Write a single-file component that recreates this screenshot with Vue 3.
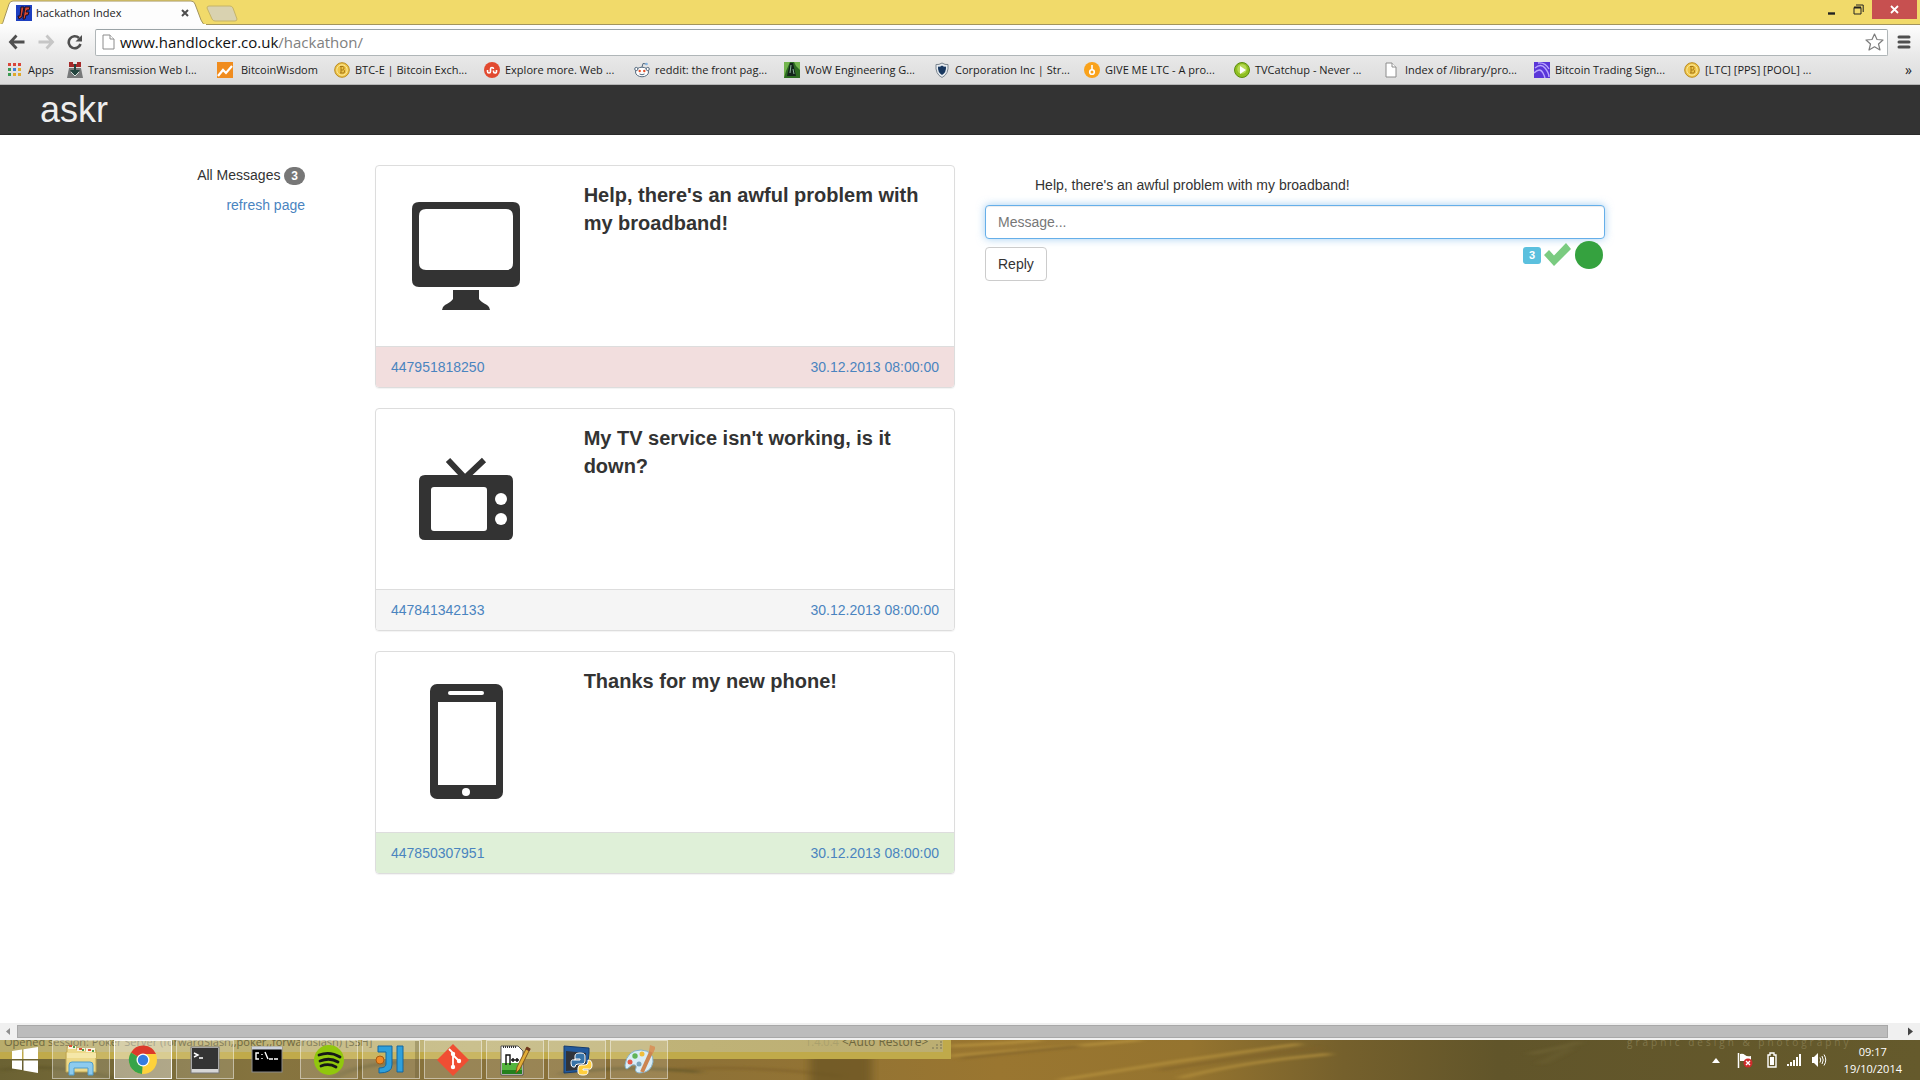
<template>
  <div class="desktop">
    <header class="browser">
      <div class="tab-strip">
        <div class="tab">
          <svg class="tab-shape" viewBox="0 0 206 25" aria-hidden="true">
            <path d="M0 25C3 24 3 22 4 19L9 4Q10 1 13 1H191Q194 1 195 4L201 20Q203 25 206 25Z" fill="#fdfdfd" stroke="#a3945c" />
            <path d="M0 25H206" stroke="#fdfdfd" stroke-width="2" />
          </svg>
          <svg class="favicon" viewBox="0 0 16 16" aria-hidden="true">
            <rect width="16" height="16" fill="#1d3fc0" />
            <path d="M5 2H8L6 12L3 14L2 11H4ZM9 2H14L13 5H11L10 7H13L12 10H10L9 14H7Z" fill="#d8452d" stroke="#1a0e20" stroke-width="1" />
          </svg>
          <span class="tab-title">hackathon Index</span>
          <button class="tab-close" aria-label="Close tab">
            <svg width="8" height="8" viewBox="0 0 8 8"><path d="M1 1L7 7M7 1L1 7" stroke="#4d4d4d" stroke-width="2" /></svg>
          </button>
        </div>
        <button class="new-tab" aria-label="New tab">
          <svg width="32" height="17" viewBox="0 0 32 17"><path d="M3 1H24Q26 1 27 3L31 14Q31 16 29 16H9Q7 16 6 14L1 3Q1 1 3 1Z" fill="#d9d2b0" stroke="#c5b468" /></svg>
        </button>
        <div class="window-buttons">
          <button class="win-btn" aria-label="Minimize">
            <svg width="10" height="12" viewBox="0 0 10 12"><path d="M1 9.5H8" stroke="#222" stroke-width="2.4" /></svg>
          </button>
          <button class="win-btn" aria-label="Restore">
            <svg width="11" height="11" viewBox="0 0 11 11" fill="none" stroke="#222"><path d="M1 3.5H8V10H1Z" /><path d="M1 3.5H8" stroke-width="2" /><path d="M3 1H10.2V8" /></svg>
          </button>
          <button class="win-btn win-close" aria-label="Close">
            <svg width="9" height="9" viewBox="0 0 9 9"><path d="M1 1L8 8M8 1L1 8" stroke="#fff" stroke-width="1.8" /></svg>
          </button>
        </div>
      </div>

      <div class="toolbar">
        <button class="nav-btn" aria-label="Back">
          <svg width="18" height="16" viewBox="0 0 18 16" fill="none" stroke="#4f4f4f" stroke-width="2.8"><path d="M8.5 1.5L2.5 8L8.5 14.5M3 8H16.5" /></svg>
        </button>
        <button class="nav-btn" aria-label="Forward">
          <svg width="18" height="16" viewBox="0 0 18 16" fill="none" stroke="#c6c6c6" stroke-width="2.8"><path d="M9.5 1.5L15.5 8L9.5 14.5M15 8H1.5" /></svg>
        </button>
        <button class="nav-btn" aria-label="Reload">
          <svg width="18" height="16" viewBox="0 0 18 16"><path d="M14.5 10A6 6 0 1 1 13 4" fill="none" stroke="#4f4f4f" stroke-width="2.6" /><path d="M16 1V7.5H9.5Z" fill="#4f4f4f" /></svg>
        </button>
        <div class="omnibox">
          <svg width="13" height="16" viewBox="0 0 13 16" fill="#fff" stroke="#8c8c8c"><path d="M1 1H8L12 5V15H1Z" /><path d="M8 1V5H12" /></svg>
          <span class="url">www.handlocker.co.uk<span class="url-path">/hackathon/</span></span>
          <svg class="star" width="19" height="18" viewBox="0 0 19 18"><path d="M9.5 1L12 6.5L18 7L13.5 11L15 17L9.5 13.8L4 17L5.5 11L1 7L7 6.5Z" fill="#fff" stroke="#7d7d7d" stroke-width="1.2" stroke-linejoin="round" /></svg>
        </div>
        <button class="menu-btn" aria-label="Menu">
          <svg width="14" height="14" viewBox="0 0 14 14"><path d="M2 2H12M2 7H12M2 12H12" stroke="#4f4f4f" stroke-width="3" stroke-linecap="round" /></svg>
        </button>
      </div>

      <nav class="bookmarks">
        <a class="bookmark bookmark-apps" href="#">
          <svg width="14" height="14" viewBox="0 0 14 14" aria-hidden="true">
            <rect v-for="(color, i) in appDots" :key="i" :x="(i % 3) * 5" :y="Math.floor(i / 3) * 5" width="3" height="3" :fill="color" />
          </svg>
          <span>Apps</span>
        </a>
        <a v-for="mark in bookmarks" :key="mark.label" class="bookmark" :class="{ 'bookmark-short': mark.short }" href="#">
          <svg width="16" height="16" viewBox="0 0 16 16" aria-hidden="true">
            <g v-if="mark.icon === 'transmission'">
              <path d="M2 6H14L16 16H0Z" fill="#77797a" /><path d="M2 0H6V2H10V0H14V5H2Z" fill="#a52a2a" /><path d="M7 2H9V8H13L8 14L3 8H7Z" fill="#23453f" /><path d="M4 10L8 14L12 10" fill="none" stroke="#d5e0dc" />
            </g>
            <g v-else-if="mark.icon === 'chart'">
              <rect width="16" height="16" fill="#f08c1e" /><path d="M1 14L6 8L9 11L15 4" fill="none" stroke="#fff" stroke-width="2.2" />
            </g>
            <g v-else-if="mark.icon === 'coin'">
              <circle cx="8" cy="8" r="7.3" fill="#efc64a" stroke="#b98a20" /><circle cx="8" cy="8" r="5.2" fill="none" stroke="#fbe79b" /><path d="M6 4.5H9Q11 5 9.5 7.7Q11.5 8.5 10 11H6M7 4.5V11M7 8H9" fill="none" stroke="#a67616" />
            </g>
            <g v-else-if="mark.icon === 'stumble'">
              <circle cx="8" cy="8" r="8" fill="#e2492f" /><path d="M3.5 8V9.5A1.5 1.5 0 0 0 6.5 9.5V7A1.5 1.5 0 0 1 9.5 7M9.5 8.5V9.5A1.5 1.5 0 0 0 12.5 9.5V8" fill="none" stroke="#fff" stroke-width="1.6" />
            </g>
            <g v-else-if="mark.icon === 'reddit'">
              <ellipse cx="8" cy="10" rx="6.5" ry="4.8" fill="#fff" stroke="#53687d" /><circle cx="2.3" cy="7" r="1.6" fill="#fff" stroke="#53687d" /><circle cx="13.7" cy="7" r="1.6" fill="#fff" stroke="#53687d" /><path d="M8 5L9 1.5L12.5 2M5.5 12Q8 13.5 10.5 12" fill="none" stroke="#53687d" /><circle cx="12.5" cy="2" r="1.3" fill="#83b4e2" /><circle cx="5.7" cy="9" r="1.2" fill="#e5502a" /><circle cx="10.3" cy="9" r="1.2" fill="#e5502a" />
            </g>
            <g v-else-if="mark.icon === 'wow'">
              <rect width="16" height="16" fill="#2d6b22" /><path d="M0 0H6L2 9L0 16ZM10 0H16V8L12 4Z" fill="#73b54e" /><path d="M6 1H9L12 14H3Z" fill="#12241a" /><path d="M7 3L6 11M9 7L10 12" stroke="#8fb7a0" />
            </g>
            <g v-else-if="mark.icon === 'shield'">
              <path d="M8 1Q11 3 14 2.5Q15 12 8 15.5Q1 12 2 2.5Q5 3 8 1Z" fill="#e6ebf0" stroke="#7b858f" /><path d="M8 3.5Q10 5 12 4.6Q12.5 10.5 8 13Q3.5 10.5 4 4.6Q6 5 8 3.5Z" fill="#17375f" />
            </g>
            <g v-else-if="mark.icon === 'ltc'">
              <circle cx="8" cy="8" r="8" fill="#f9a21b" /><circle cx="8" cy="10" r="2.3" fill="none" stroke="#fff" stroke-width="1.6" /><path d="M8 3V8" stroke="#fff" stroke-width="1.6" />
            </g>
            <g v-else-if="mark.icon === 'play'">
              <circle cx="8" cy="8" r="7.5" fill="#8fbf21" stroke="#5c8c10" /><circle cx="8" cy="7" r="4.8" fill="#b7d957" /><path d="M6 4L12 8L6 12Z" fill="#fff" />
            </g>
            <g v-else-if="mark.icon === 'page'" fill="#fff" stroke="#8c8c8c">
              <path d="M2 1H8L12 5V15H2Z" /><path d="M8 1V5H12" />
            </g>
            <g v-else>
              <rect width="16" height="16" fill="#5a36d8" /><path d="M1 6Q7 1 11 6T15 15M0 11Q6 5 9 11T10 16M4 1Q11 0 15 7" fill="none" stroke="#b9a6ff" stroke-width="1.4" />
            </g>
          </svg>
          <span>{{ mark.label }}</span>
        </a>
        <button class="more" aria-label="More bookmarks">»</button>
      </nav>
    </header>

    <div class="navbar"><a class="brand" href="#">askr</a></div>

    <main class="page">
      <aside class="sidebar">
        <div class="all-messages">All Messages <span class="badge">3</span></div>
        <a href="#">refresh page</a>
      </aside>

      <section class="feed">
        <article v-for="msg in messages" :key="msg.phone" class="panel">
          <div class="panel-body">
            <div class="panel-icon">
              <svg width="150" height="150" viewBox="0 0 150 150" fill="#333" aria-hidden="true">
                <g v-if="msg.icon === 'desktop'">
                  <path fill-rule="evenodd" d="M28 21H122Q129 21 129 28V99Q129 106 122 106H28Q21 106 21 99V28Q21 21 28 21ZM35 28Q28 28 28 35V82Q28 89 35 89H115Q122 89 122 82V35Q122 28 115 28Z" />
                  <path d="M62 109H88V118Q90 121 96 124Q99 126 99 129H51Q51 126 54 124Q60 121 62 118Z" />
                </g>
                <g v-else-if="msg.icon === 'tv'">
                  <path d="M57 36L74 54L93 36" fill="none" stroke="#333" stroke-width="6" />
                  <path fill-rule="evenodd" d="M34 51H116Q122 51 122 57V110Q122 116 116 116H34Q28 116 28 110V57Q28 51 34 51ZM43 63Q40 63 40 66V104Q40 107 43 107H93Q96 107 96 104V66Q96 63 93 63Z" />
                  <circle cx="110" cy="75" r="6" fill="#fff" />
                  <circle cx="110" cy="95" r="6" fill="#fff" />
                </g>
                <g v-else>
                  <rect x="39" y="17" width="73" height="115" rx="7" />
                  <rect x="47" y="35" width="58" height="83" fill="#fff" />
                  <rect x="57" y="24" width="36" height="4" rx="2" fill="#fff" />
                  <circle cx="75" cy="125" r="4" fill="#fff" />
                </g>
              </svg>
            </div>
            <h4 class="panel-text">{{ msg.text }}</h4>
          </div>
          <div class="panel-footer" :class="msg.mood">
            <a href="#">{{ msg.phone }}</a>
            <a href="#">{{ msg.date }}</a>
          </div>
        </article>
      </section>

      <section class="reply">
        <p class="quote">Help, there's an awful problem with my broadband!</p>
        <input v-model="reply" class="form-control" type="text" placeholder="Message..." aria-label="Message" />
        <div class="reply-row">
          <button class="btn">Reply</button>
          <div class="status">
            <span class="label">3</span>
            <svg width="28" height="24" viewBox="0 0 28 24" aria-hidden="true"><path d="M0 12L5 7L10 12.5L22 0L27 6L10 23Z" fill="#7acb80" /></svg>
            <span class="dot"></span>
          </div>
        </div>
      </section>
    </main>

    <div class="scrollbar">
      <svg width="17" height="17" viewBox="0 0 17 17" aria-hidden="true"><path d="M10 5V12L6 8.5Z" fill="#8e8e8e" /></svg>
      <div class="thumb"></div>
      <svg class="scroll-end" width="17" height="17" viewBox="0 0 17 17" aria-hidden="true"><path d="M6 4.5V12.5L11 8.5Z" fill="#444" /></svg>
    </div>

    <footer class="taskbar">
      <svg class="wallpaper" viewBox="0 0 1920 40" preserveAspectRatio="none" aria-hidden="true">
        <defs>
          <linearGradient id="wood">
            <stop offset="0" stop-color="#6b6233" />
            <stop offset="0.14" stop-color="#86743f" />
            <stop offset="0.32" stop-color="#8a7038" />
            <stop offset="0.52" stop-color="#9a7630" />
            <stop offset="0.62" stop-color="#95742f" />
            <stop offset="0.7" stop-color="#75602c" />
            <stop offset="0.78" stop-color="#61552a" />
            <stop offset="1" stop-color="#655a2c" />
          </linearGradient>
          <linearGradient id="ghost">
            <stop offset="0" stop-color="#b9ad6c" />
            <stop offset="0.5" stop-color="#c2b67c" />
            <stop offset="1" stop-color="#bcae72" />
          </linearGradient>
          <filter id="soft"><feGaussianBlur stdDeviation="5 1" /></filter>
        </defs>
        <rect width="1920" height="40" fill="url(#wood)" />
        <g filter="url(#soft)" fill="none" stroke-width="3" opacity="0.6">
          <path d="M950 16Q1060 8 1140 0M950 6Q1000 4 1040 0M1060 40Q1180 20 1300 4M1180 38Q1240 22 1330 14" stroke="#bf9a42" />
          <path d="M960 18Q1020 12 1080 6M1160 30Q1260 14 1320 8M670 30Q740 24 840 36" stroke="#80622a" />
          <path d="M0 30Q60 22 120 40M330 40Q350 26 400 22M560 34Q620 24 700 32" stroke="#5c5228" />
          <path d="M1530 14Q1560 8 1580 2M1540 24Q1560 14 1570 8" stroke="#736737" />
        </g>
        <rect x="810" y="18" width="62" height="26" fill="#685322" opacity="0.7" filter="url(#soft)" />
        <rect width="951" height="19" fill="#c0aa4a" />
        <rect width="943" height="12" fill="url(#ghost)" />
        <g fill="#999064">
          <rect x="940" y="1" width="2" height="2" /><rect x="936" y="4" width="2" height="2" /><rect x="940" y="4" width="2" height="2" /><rect x="932" y="7" width="2" height="2" /><rect x="936" y="7" width="2" height="2" /><rect x="940" y="7" width="2" height="2" />
        </g>
      </svg>
      <div class="ghost-row">
        <span class="ghost-session">Opened session: Poker Server (forwardSlash,,poker,,forwardslash) [SSH]</span>
        <span class="ghost-version">1.4.0.4</span>
        <span class="ghost-restore">&lt;Auto Restore&gt;</span>
        <span class="ghost-credit">graphic design &amp; photography</span>
      </div>

      <div class="task-row">
        <button class="start" aria-label="Start">
          <svg width="28" height="28" viewBox="0 0 28 28" fill="#fff"><path d="M1 5L11 3.5V13H1ZM12.5 3.3L27 1V13H12.5ZM1 14.5H11V24L1 22.5ZM12.5 14.5H27V27L12.5 24.5Z" /></svg>
        </button>
        <button v-for="task in tasks" :key="task.name" class="task" :class="task.state" :aria-label="task.name">
          <svg width="32" height="32" viewBox="0 0 32 32">
            <g v-if="task.name === 'Explorer'">
              <path d="M2 3H12V6H31V28H1V8H2Z" fill="#edd98a" stroke="#bda553" /><path d="M3 2H11V5H3ZM12 4H20V7H12ZM21 4H30V8H21Z" fill="#f8f3dd" /><path d="M4 2H7M14 5H17M23 6H26" stroke="#d94f35" stroke-width="2" /><path d="M8 3H10M17 6H19M27 7H29" stroke="#4e9a4a" stroke-width="2" /><path d="M2 9H31V14H2Z" fill="#f5e7a8" /><path d="M4 31V21Q4 18 7 18H25Q28 18 28 21V31H23V24H9V31Z" fill="#8dcbee" stroke="#4e9dcc" />
            </g>
            <g v-else-if="task.name === 'Chrome'">
              <circle cx="16" cy="16" r="14" fill="#fdd23c" /><path d="M16 16L4 8.5A14 14 0 0 1 29 10H16Z" fill="#dc3a2c" /><path d="M16 16L15 30A14 14 0 0 1 4 8.5Z" fill="#37a449" /><circle cx="16" cy="16" r="6.5" fill="#fff" /><circle cx="16" cy="16" r="5.2" fill="#357de0" />
            </g>
            <g v-else-if="task.name === 'PuTTY'">
              <rect x="2" y="3" width="28" height="26" fill="#d7d7d7" stroke="#777" /><rect x="3" y="4" width="26" height="21" fill="#343434" /><path d="M5 9L9 11L5 13M10 14H14" fill="none" stroke="#fff" stroke-width="1.4" />
            </g>
            <g v-else-if="task.name === 'Command Prompt'">
              <rect x="1" y="3" width="30" height="25" fill="#000" stroke="#8d8d8d" /><path d="M1 4H31" stroke="#ccd2dc" stroke-width="3" /><path d="M8 9H5V15H8M11 10V11M11 14V15M14 8L17 15M18 15H22M23 15H27" fill="none" stroke="#fff" stroke-width="1.4" />
            </g>
            <g v-else-if="task.name === 'Spotify'">
              <circle cx="16" cy="16" r="15" fill="#91c70d" /><path d="M6 11Q17 7 27 13M7 17Q17 13 25 18M8 22Q16 19 23 23" fill="none" stroke="#171717" stroke-width="2.8" stroke-linecap="round" />
            </g>
            <g v-else-if="task.name === 'IntelliJ IDEA'">
              <path d="M3 2H17V21Q17 29 4 29V24Q11 24 11 20V8H3ZM22 2H28V28H22Z" fill="#2fa0dc" stroke="#14679e" /><circle cx="5" cy="16" r="4" fill="#f28b25" stroke="#a95a11" />
            </g>
            <g v-else-if="task.name === 'Git'">
              <path d="M16 0L32 16L16 32L0 16Z" fill="#f04e33" /><path d="M12 5L16 9V23M16 11L22 17" fill="none" stroke="#fff" stroke-width="1.8" /><circle cx="16" cy="10" r="2.2" fill="#fff" /><circle cx="16" cy="23" r="2.2" fill="#fff" /><circle cx="22" cy="17" r="2.2" fill="#fff" />
            </g>
            <g v-else-if="task.name === 'Notepad++'">
              <path d="M2 2H19L24 7V31H2Z" fill="#fff" stroke="#555" /><path d="M3 19H23V30H3Z" fill="#54b43c" /><path d="M3 26H23V30H3Z" fill="#23801d" /><path d="M4 3H18" stroke="#333" stroke-dasharray="1 1" stroke-width="2" /><path d="M7 21V11H11V21M12 16H16M14 14V18M16 16H20M18 14V18" fill="none" stroke="#111" stroke-width="1.4" /><path d="M28 3L31 5L21 25L17 29L18 23Z" fill="#e2ad37" stroke="#81571b" /><path d="M27 4L31 6" stroke="#6e3620" stroke-width="3" />
            </g>
            <g v-else-if="task.name === 'Python'">
              <path d="M3 2L28 4V9L26 27L3 29Z" fill="#235a9c" stroke="#163c6d" /><path d="M5 7L25 9V25L5 27Z" fill="#30343b" /><path d="M14 16V12Q14 9 19 9T24 12V17Q24 20 21 20H17Q14 20 14 23H12Q10 23 10 19T13 16H19V15H14Z" fill="#3773a8" stroke="#fff" /><path d="M27 16Q31 16 31 21T27 25H22V26H27V28Q27 31 22 31T17 28V24Q17 21 20 21H24Q27 21 27 18Z" fill="#ffce3d" stroke="#fff" />
            </g>
            <g v-else>
              <path d="M2 21Q4 6 18 6Q31 7 30 18Q28 29 16 29Q11 28 13 24Q14 20 9 21L4 25Q2 25 2 21Z" fill="#d9edf7" stroke="#86b1c8" /><circle cx="7" cy="18" r="2.5" fill="#e45b48" /><circle cx="12" cy="12" r="2.7" fill="#60b558" /><circle cx="19" cy="10" r="2.5" fill="#f0bd3c" /><circle cx="16" cy="20" r="2.5" fill="#7aa5bc" /><path d="M29 6L19 28" stroke="#cc8551" stroke-width="4" /><path d="M27 1L33 3L30 9L26 7Z" fill="#d7955d" />
            </g>
          </svg>
        </button>

        <div class="tray">
          <svg width="8" height="5" viewBox="0 0 8 5" aria-hidden="true"><path d="M0 5L4 0L8 5Z" fill="#fff" /></svg>
          <svg class="tray-flag" width="16" height="16" viewBox="0 0 16 16" aria-hidden="true"><path d="M1.5 1V16" stroke="#fff" stroke-width="1.5" /><path d="M3 2Q6 1 8 3T14 4V9H3Z" fill="#fff" /><circle cx="11" cy="11" r="4.5" fill="#cf2c2c" /><path d="M9 9L13 13M13 9L9 13" stroke="#fff" stroke-width="1.4" /></svg>
          <svg class="tray-battery" width="10" height="16" viewBox="0 0 10 16" aria-hidden="true"><path d="M1 3H3V1H7V3H9V15H1Z" fill="none" stroke="#fff" stroke-width="1.4" /><rect x="3" y="5" width="4" height="8" fill="#fff" /></svg>
          <svg width="16" height="14" viewBox="0 0 16 14" fill="#fff" aria-hidden="true"><path d="M1 11H3V13H1ZM4 9H6V13H4ZM7 7H9V13H7ZM10 4H12V13H10ZM13 1H15V13H13Z" /></svg>
          <svg width="16" height="16" viewBox="0 0 16 16" aria-hidden="true"><path d="M1 5H3L7 1V15L3 11H1Z" fill="#fff" /><path d="M9 5.5Q10.5 8 9 10.5M11 4Q13.5 8 11 12M13 2.5Q16.5 8 13 13.5" fill="none" stroke="#fff" /></svg>
          <div class="clock"><span>09:17</span><span>19/10/2014</span></div>
        </div>
      </div>
    </footer>
  </div>
</template>

<script setup>
import { ref } from 'vue'

const reply = ref('')

const appDots = [
  '#d9463a', '#d9463a', '#d9463a',
  '#3b9b52', '#3f7fd8', '#e0a92d',
  '#3b9b52', '#e0a92d', '#e0a92d'
]

const bookmarks = [
  { icon: 'transmission', label: 'Transmission Web I...' },
  { icon: 'chart', label: 'BitcoinWisdom', short: true },
  { icon: 'coin', label: 'BTC-E | Bitcoin Exch...' },
  { icon: 'stumble', label: 'Explore more. Web ...' },
  { icon: 'reddit', label: 'reddit: the front pag...' },
  { icon: 'wow', label: 'WoW Engineering G...' },
  { icon: 'shield', label: 'Corporation Inc | Str...' },
  { icon: 'ltc', label: 'GIVE ME LTC - A pro...' },
  { icon: 'play', label: 'TVCatchup - Never ...' },
  { icon: 'page', label: 'Index of /library/pro...' },
  { icon: 'signal', label: 'Bitcoin Trading Sign...' },
  { icon: 'coin', label: '[LTC] [PPS] [POOL] ...' }
]

const messages = [
  { icon: 'desktop', text: "Help, there's an awful problem with my broadband!", phone: '447951818250', date: '30.12.2013 08:00:00', mood: 'negative' },
  { icon: 'tv', text: "My TV service isn't working, is it down?", phone: '447841342133', date: '30.12.2013 08:00:00', mood: 'neutral' },
  { icon: 'phone', text: 'Thanks for my new phone!', phone: '447850307951', date: '30.12.2013 08:00:00', mood: 'positive' }
]

const tasks = [
  { name: 'Explorer', state: 'open' },
  { name: 'Chrome', state: 'active' },
  { name: 'PuTTY', state: 'open' },
  { name: 'Command Prompt', state: '' },
  { name: 'Spotify', state: 'open' },
  { name: 'IntelliJ IDEA', state: 'open stacked' },
  { name: 'Git', state: 'open' },
  { name: 'Notepad++', state: 'open' },
  { name: 'Python', state: 'open' },
  { name: 'Paint', state: 'open' }
]
</script>

<style>
body {
  margin: 0;
}
</style>

<style scoped>
.desktop {
  display: flex;
  flex-direction: column;
  min-height: 100vh;
  background: #fff;
  color: #333;
  font: 14px/20px "Liberation Sans", Arial, sans-serif;
}

.desktop *,
.desktop *::before {
  box-sizing: border-box;
}

svg {
  display: block;
  flex: none;
}

button {
  margin: 0;
  padding: 0;
  border: 0;
  background: none;
  color: inherit;
  font: inherit;
}

a {
  color: #4a84bf;
  text-decoration: none;
}

/* browser window */
.browser {
  font-family: "Segoe UI", "Open Sans", "Noto Sans", sans-serif;
  font-size: 12px;
  line-height: 16px;
  color: #1c1c1c;
}

.tab-strip {
  display: flex;
  height: 25px;
  background: #f1da6a;
  border-bottom: 1px solid #a3945c;
}

.tab {
  position: relative;
  display: flex;
  align-items: center;
  width: 206px;
  height: 25px;
  padding: 0 17px 0 16px;
}

.tab-shape {
  position: absolute;
  inset: 0;
  width: 100%;
  height: 100%;
}

.favicon {
  position: relative;
  width: 16px;
  height: 16px;
}

.tab-title {
  position: relative;
  flex: 1;
  margin-left: 4px;
  font-size: 11px;
}

.tab-close {
  position: relative;
  display: grid;
  height: 16px;
  place-items: center;
}

.new-tab {
  align-self: flex-start;
  margin-top: 5px;
}

.window-buttons {
  display: flex;
  height: 19px;
  margin-left: auto;
  padding-right: 3px;
}

.win-btn {
  display: grid;
  width: 27px;
  place-items: center;
}

.win-close {
  width: 45px;
  background: #c75050;
}

.toolbar {
  display: flex;
  align-items: center;
  height: 32px;
  padding: 2px 9px 0 8px;
  background: linear-gradient(#fdfdfd, #e8e8e8);
}

.nav-btn {
  width: 29px;
}

.omnibox {
  display: flex;
  flex: 1;
  align-items: center;
  gap: 5px;
  height: 27px;
  padding: 0 3px 0 6px;
  background: #fff;
  border: 1px solid #b0b6b8;
  border-top-color: #9aa3a6;
  border-radius: 2px;
}

.url {
  flex: 1;
  font-size: 15px;
  line-height: 20px;
  color: #111;
}

.url-path {
  color: #808080;
}

.menu-btn {
  margin-left: 9px;
}

.bookmarks {
  display: flex;
  align-items: center;
  height: 28px;
  padding: 0 8px 2px;
  background: linear-gradient(#e8e8e8, #dcdcdc);
  border-bottom: 1px solid #b4b4b4;
}

.bookmark {
  display: flex;
  flex: 0 1 150px;
  align-items: center;
  gap: 5px;
  min-width: 0;
  font-size: 11px;
  color: #1c1c1c;
  white-space: nowrap;
}

.bookmark-apps {
  flex-basis: 59px;
  gap: 6px;
}

.bookmark-short {
  flex-basis: 117px;
  gap: 8px;
}

.more {
  margin-left: auto;
  font-size: 14px;
}

/* askr page */
.navbar {
  display: flex;
  align-items: center;
  height: 50px;
  padding: 0 40px;
  background: #333;
  border-bottom: 1px solid #2a2a2a;
}

.brand {
  font-size: 36px;
  line-height: 40px;
  color: #eee;
}

.page {
  display: grid;
  flex: 1;
  grid-template-columns: 375fr 595fr 650fr 300fr;
  align-items: start;
  padding: 30px 0;
}

.sidebar {
  display: flex;
  flex-direction: column;
  align-items: flex-end;
  gap: 10px;
  padding-right: 70px;
}

.badge {
  display: inline-block;
  min-width: 20px;
  padding: 3px 7px;
  border-radius: 10px;
  background: #777;
  color: #fff;
  font-size: 12px;
  font-weight: 700;
  line-height: 12px;
  text-align: center;
}

.feed {
  display: flex;
  flex-direction: column;
  gap: 20px;
  padding-right: 15px;
}

.panel {
  overflow: hidden;
  border: 1px solid #ddd;
  border-radius: 4px;
  box-shadow: 0 1px 1px rgba(0, 0, 0, 0.05);
}

.panel-body {
  display: grid;
  grid-template-columns: 1fr 2fr;
  padding: 15px 0;
}

.panel-icon {
  padding-left: 15px;
}

.panel-text {
  margin: 0;
  padding: 0 15px;
  font-size: 20px;
  font-weight: 700;
  line-height: 28px;
}

.panel-footer {
  display: flex;
  justify-content: space-between;
  padding: 10px 15px;
  border-top: 1px solid #ddd;
  background: #f5f5f5;
}

.negative {
  background: #f2dede;
}

.positive {
  background: #dff0d8;
}

.reply {
  padding: 10px 15px 0;
}

.quote {
  margin: 0 0 10px;
  padding-left: 50px;
}

.form-control {
  display: block;
  width: 100%;
  height: 34px;
  padding: 6px 12px;
  border: 1px solid #66afe9;
  border-radius: 4px;
  outline: 0;
  background: #fff;
  box-shadow: inset 0 1px 1px rgba(0, 0, 0, 0.075), 0 0 8px rgba(102, 175, 233, 0.6);
  color: #555;
  font: inherit;
}

.form-control::placeholder {
  color: #777;
  opacity: 1;
}

.reply-row {
  display: flex;
  align-items: flex-start;
  justify-content: space-between;
  padding-top: 2px;
}

.btn {
  height: 34px;
  margin-top: 6px;
  padding: 6px 12px;
  border: 1px solid #ccc;
  border-radius: 4px;
  background: #fff;
}

.status {
  display: flex;
  align-items: center;
  gap: 3px;
  padding-right: 2px;
}

.label {
  padding: 3px 6px;
  border-radius: 3px;
  background: #5bc0de;
  color: #fff;
  font-size: 11px;
  font-weight: 700;
  line-height: 11px;
}

.dot {
  width: 28px;
  height: 28px;
  border-radius: 50%;
  background: #35a23f;
}

.scrollbar {
  display: flex;
  height: 17px;
  padding-right: 1px;
  background: #f0f0f0;
}

.thumb {
  flex: 1;
  height: 13px;
  margin-top: 2px;
  background: #bcbcbc;
  border: 1px solid #a8a8a8;
}

.scroll-end {
  margin-left: 14px;
}

/* taskbar */
.taskbar {
  position: relative;
  height: 40px;
  overflow: hidden;
  font-family: "Segoe UI", "Open Sans", "Noto Sans", sans-serif;
}

.wallpaper {
  position: absolute;
  inset: 0;
  width: 100%;
  height: 100%;
}

.ghost-row {
  position: absolute;
  top: -6px;
  right: 0;
  left: 0;
  display: grid;
  grid-template-columns: 801fr 37fr 785fr 293fr;
  padding-left: 4px;
  color: #6d673f;
  font-size: 12px;
  line-height: 16px;
  white-space: nowrap;
}

.ghost-session {
  font-size: 11px;
}

.ghost-version {
  color: #aba16d;
  font-size: 11px;
}

.ghost-credit {
  color: #81764a;
  font-size: 10px;
  letter-spacing: 3px;
}

.task-row {
  position: relative;
  display: flex;
  gap: 4px;
  height: 40px;
}

.start {
  width: 48px;
  padding-left: 11px;
}

.task {
  display: grid;
  width: 58px;
  height: 39px;
  place-items: center;
  border: 1px solid transparent;
}

.open {
  background: rgba(255, 255, 255, 0.14);
  border-color: rgba(255, 255, 255, 0.45);
}

.active {
  background: rgba(255, 255, 255, 0.4);
  border-color: rgba(255, 255, 255, 0.9);
}

.stacked {
  box-shadow: inset -4px 0 rgba(90, 80, 40, 0.3);
}

.tray {
  display: flex;
  align-items: center;
  gap: 9px;
  margin-left: auto;
  padding-right: 18px;
  color: #fff;
}

.tray-flag {
  margin-left: 8px;
}

.tray-battery {
  margin-left: 5px;
}

.clock {
  display: flex;
  flex-direction: column;
  align-items: center;
  margin-left: 8px;
  font-size: 11px;
  line-height: 17px;
}
</style>
